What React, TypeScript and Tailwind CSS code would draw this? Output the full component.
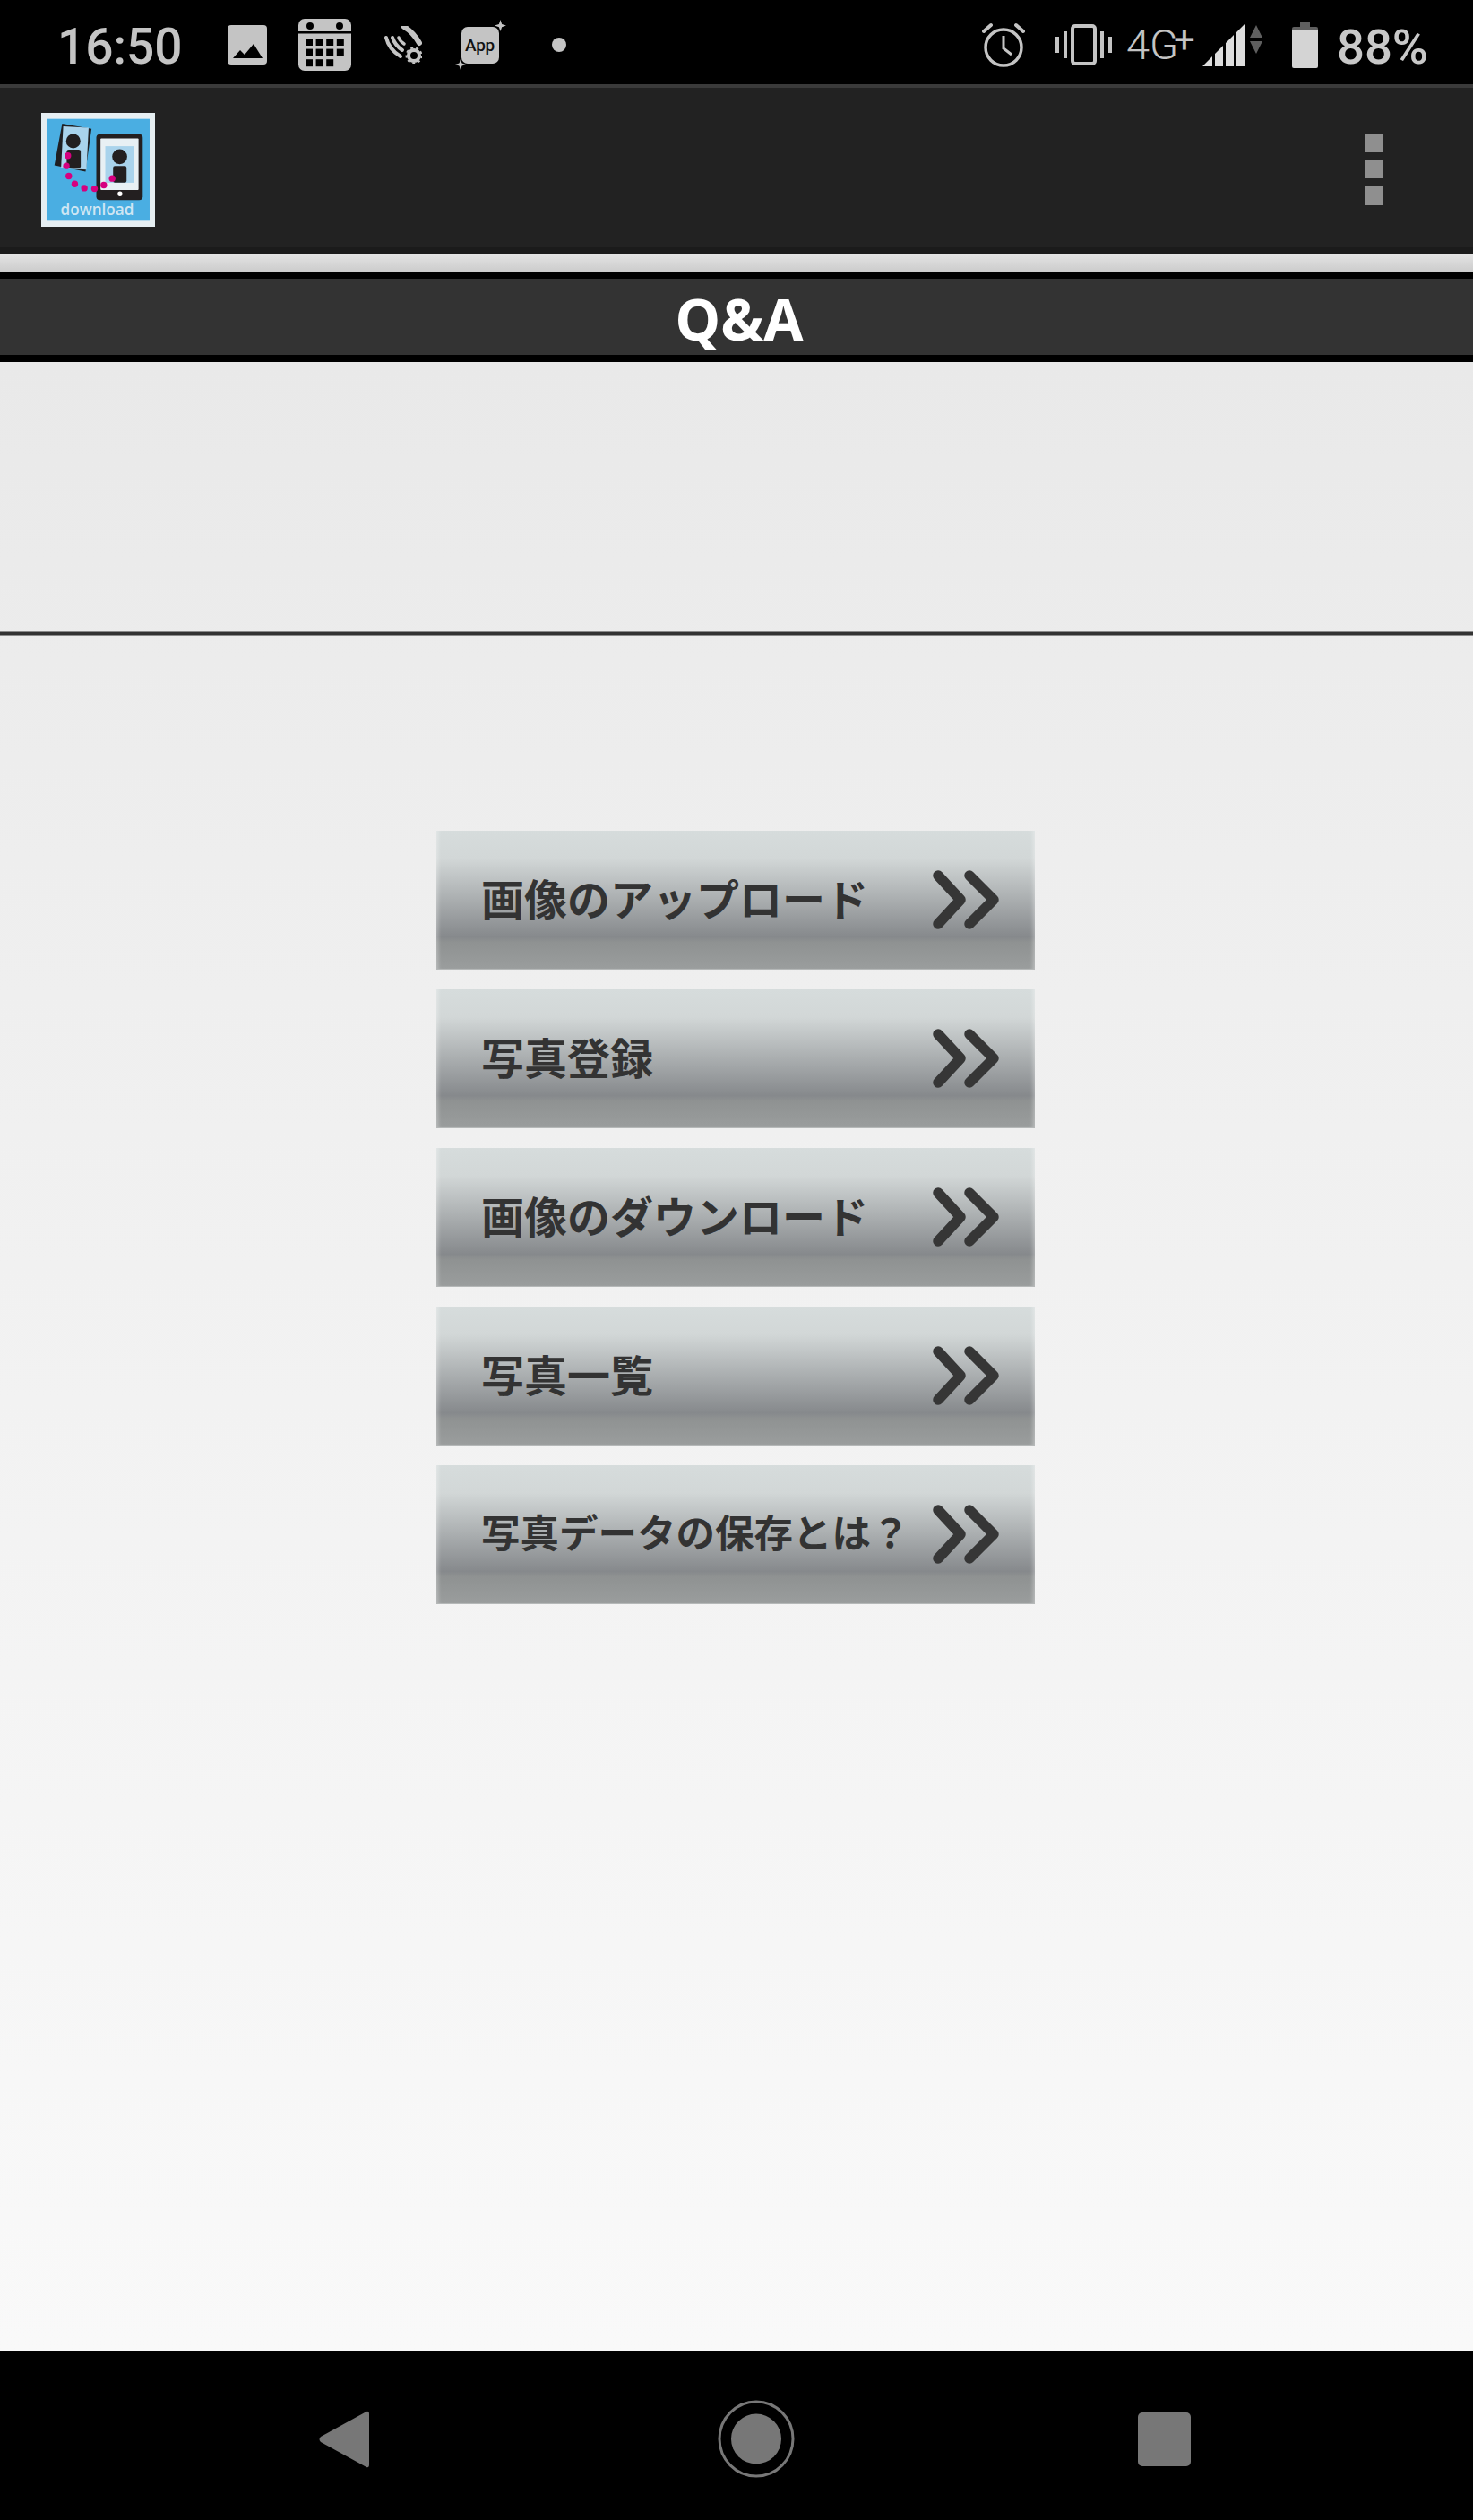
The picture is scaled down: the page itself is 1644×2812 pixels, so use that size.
const BG = "#c4c4c4";

function StatusLeftIcons() {
  return (
    <>
      <svg className="ml-[50px] h-[44px] w-[44px] shrink-0" viewBox="0 0 44 44">
        <rect width="44" height="44" rx="4" fill={BG} />
        <path d="M6 37 L14 28 L19 33 L29 21 L39 37 Z" fill="#000" />
      </svg>
      <svg className="ml-[35px] h-[58px] w-[59px] shrink-0" viewBox="0 0 59 58">
        <rect width="59" height="58" rx="7" fill={BG} />
        <rect x="0" y="14" width="59" height="2.5" fill="#000" />
        <circle cx="13" cy="8" r="4" fill="#000" />
        <circle cx="46" cy="8" r="4" fill="#000" />
        {[0, 1, 2].map((r) =>
          [0, 1, 2, 3].map((c) =>
            r === 2 && c === 3 ? null : (
              <rect key={`${r}${c}`} x={8 + c * 11.6} y={22 + r * 11.6} width="8" height="8" fill="#000" />
            ),
          ),
        )}
      </svg>
      <svg className="ml-[37px] h-[42px] w-[42px] shrink-0" viewBox="0 0 42 42">
        <g fill="none" stroke={BG} strokeLinecap="round">
          <path d="M2 13 C4 22 10 29 18 34" strokeWidth="4" />
          <path d="M9 13 C11 19 14 23 20 27" strokeWidth="4" />
          <path d="M16 13 C17 16 19 18 22 20" strokeWidth="3.5" />
          <path d="M22 1 C29 5 35 12 39 19" strokeWidth="6" />
        </g>
        <circle cx="33" cy="33" r="6" fill="none" stroke={BG} strokeWidth="4" />
        <circle cx="33" cy="33" r="8.5" fill="none" stroke={BG} strokeWidth="2" strokeDasharray="3 3" />
      </svg>
      <div className="relative ml-[44px] flex h-[41px] w-[42px] shrink-0 items-center justify-center rounded-[7px] bg-[#c4c4c4]">
        <span className="font-['Roboto',sans-serif] text-[19px] font-medium leading-none tracking-[-0.3px] text-[#111]">App</span>
        <svg className="absolute right-[-8px] top-[-8px] h-[13px] w-[13px]" viewBox="0 0 12 12">
          <path d="M6 0 L7.5 4.5 L12 6 L7.5 7.5 L6 12 L4.5 7.5 L0 6 L4.5 4.5 Z" fill={BG} />
        </svg>
        <svg className="absolute bottom-[-7px] left-[-7px] h-[12px] w-[12px]" viewBox="0 0 12 12">
          <path d="M6 0 L7.5 4.5 L12 6 L7.5 7.5 L6 12 L4.5 7.5 L0 6 L4.5 4.5 Z" fill={BG} />
        </svg>
      </div>
      <div className="ml-[59px] h-[16px] w-[16px] shrink-0 rounded-full bg-[#c4c4c4]" />
    </>
  );
}

function StatusRightIcons() {
  return (
    <>
      <svg className="h-[50px] w-[48px] shrink-0" viewBox="0 0 48 50">
        <circle cx="24" cy="28" r="20" fill="none" stroke={BG} strokeWidth="3.5" />
        <path d="M24 15 V29 L33 36" fill="none" stroke={BG} strokeWidth="3" />
        <path d="M2 10 L10 3 M46 10 L38 3" stroke={BG} strokeWidth="4" strokeLinecap="round" />
      </svg>
      <svg className="ml-[34px] h-[46px] w-[63px] shrink-0" viewBox="0 0 63 46">
        <rect x="19" y="2" width="25" height="42" rx="3" fill="none" stroke={BG} strokeWidth="4" />
        <rect x="9" y="8" width="4" height="30" fill={BG} />
        <rect x="50" y="8" width="4" height="30" fill={BG} />
        <rect x="0" y="14" width="4" height="18" fill={BG} />
        <rect x="59" y="14" width="4" height="18" fill={BG} />
      </svg>
      <div className="relative ml-[16px] h-[46px] w-[75px] shrink-0 font-['Roboto',sans-serif] font-light leading-none text-[#c4c4c4]">
        <span className="absolute left-0 top-[-1px] text-[47px] leading-none">4G</span>
        <span className="absolute right-[-2px] top-[-3px] text-[42px] font-normal leading-none">+</span>
      </div>
      <svg className="ml-[10px] h-[47px] w-[68px] shrink-0" viewBox="0 0 68 47">
        <path d="M0 47 L11 36 V47 Z M14 33 L23 24 V47 H14 Z M26 21 L35 12 V47 H26 Z M38 9 L47 0 V47 H38 Z" fill="#dddddd" />
        <path d="M60 1 L67 15 H53 Z M53 19 H67 L60 33 Z" fill="#5f5f5f" />
      </svg>
      <svg className="ml-[32px] h-[51px] w-[29px] shrink-0" viewBox="0 0 29 51">
        <path d="M9 0 H20 V5 H27 A2 2 0 0 1 29 7 V12 H0 V7 A2 2 0 0 1 2 5 H9 Z" fill="#5f5f5f" />
        <path d="M0 9 H29 V49 A2 2 0 0 1 27 51 H2 A2 2 0 0 1 0 49 Z" fill="#d4d4d4" />
      </svg>
      <span className="ml-[21px] mt-[5px] font-['Roboto',sans-serif] text-[54.5px] font-medium leading-none text-[#c8c8c8]">88%</span>
    </>
  );
}

function Logo() {
  return (
    <svg className="h-[127px] w-[127px] shrink-0" viewBox="48 47 380 380">
      <rect x="48" y="47" width="380" height="380" fill="#e6eef2" />
      <rect x="67" y="67" width="343" height="340" fill="#4aaee2" />
      <path d="M118 83 L216 100 L196 243 L92 222 Z" fill="#1f1f22" />
      <rect x="118" y="94" width="85" height="140" fill="#a9d3ec" transform="rotate(3 160 160)" />
      <circle cx="155" cy="141" r="24" fill="#231f20" />
      <rect x="133" y="170" width="47" height="62" rx="7" fill="#231f20" />
      <rect x="232" y="118" width="155" height="220" rx="12" fill="#231f20" />
      <rect x="246" y="132" width="127" height="172" rx="3" fill="#e8f0f4" />
      <rect x="262" y="158" width="95" height="122" fill="#a9d3ec" />
      <circle cx="310" cy="193" r="25" fill="#231f20" />
      <rect x="288" y="224" width="45" height="56" rx="6" fill="#231f20" />
      <circle cx="311" cy="317" r="8" fill="#fff" />
      {[[137, 190], [132, 224], [140, 258], [160, 284], [192, 298], [226, 300], [257, 288], [285, 266]].map(([x, y]) => (
        <circle key={`${x}-${y}`} cx={x} cy={y} r="11" fill="#d6007f" />
      ))}
      <text x="235" y="388" textAnchor="middle" textLength="245" lengthAdjust="spacingAndGlyphs" fontFamily="'Open Sans', sans-serif" fontWeight="600" fontSize="52" fill="#cfe6f3">
        download
      </text>
    </svg>
  );
}

function Chevrons() {
  return (
    <svg className="h-[66px] w-[76px] shrink-0" viewBox="0 0 76 66">
      <g fill="none" stroke="#363636" strokeWidth="11.5" strokeLinecap="round" strokeLinejoin="round">
        <path d="M7 6 L32 33 L7 60" />
        <path d="M42 6 L69 33 L42 60" />
      </g>
    </svg>
  );
}

const items = [
  { label: "画像のアップロード", cls: "text-[48px]" },
  { label: "写真登録", cls: "text-[48px]" },
  { label: "画像のダウンロード", cls: "text-[48px]" },
  { label: "写真一覧", cls: "text-[48px]" },
  { label: "写真データの保存とは？", cls: "text-[43.5px]" },
];

function MenuButton({ label, cls }: { label: string; cls: string }) {
  return (
    <div className="flex h-[155px] w-[668px] items-center justify-between border-b border-[#b5b8b8] bg-[linear-gradient(180deg,#d6dcdc_0%,#d2d7d7_20%,#86898c_77%,#8f9292_81%,#9a9d9d_100%)] pl-[50px] pr-[39px] shadow-[inset_5px_0_4px_-3px_rgba(255,255,255,0.35),inset_-5px_0_4px_-3px_rgba(255,255,255,0.35)]">
      <span className={`mb-[6px] font-['Noto_Sans_CJK_JP',sans-serif] font-bold leading-none text-[#333333] ${cls}`}>{label}</span>
      <Chevrons />
    </div>
  );
}

export default function App() {
  return (
    <div className="flex h-[2812px] w-[1644px] flex-col overflow-hidden bg-black">
      <div className="flex h-[94px] shrink-0 items-center pt-[6px]">
        <span className="ml-[64px] mt-[5px] font-['Roboto',sans-serif] text-[55px] font-medium leading-none text-[#c4c4c4]">16:50</span>
        <StatusLeftIcons />
        <div className="ml-auto mr-[50px] flex items-center">
          <StatusRightIcons />
        </div>
      </div>

      <div className="flex h-[189px] shrink-0 items-center border-t-[4px] border-b-[7px] border-t-[#3a3a3a] border-b-[#1b1b1b] bg-[#222222] pl-[46px] pr-[100px] pt-[4px]">
        <Logo />
        <div className="ml-auto flex flex-col gap-[9px]">
          <div className="h-[20px] w-[20px] bg-[#8f8f8f]" />
          <div className="h-[20px] w-[20px] bg-[#8f8f8f]" />
          <div className="h-[21px] w-[20px] bg-[#8f8f8f]" />
        </div>
      </div>

      <div className="h-[20px] shrink-0 bg-[linear-gradient(180deg,#e4e4e4,#cccccc)]" />

      <div className="flex h-[101px] shrink-0 items-center justify-center border-y-[8px] border-black bg-[#333333]">
        <span className="relative left-[3px] top-[2px] font-['Noto_Sans',sans-serif] text-[64px] font-bold leading-none text-white">Q&amp;A</span>
      </div>

      <div className="flex flex-1 flex-col bg-[linear-gradient(180deg,#e9e9e9_0%,#eeeeee_25%,#f9f9f9_100%)]">
        <div className="h-[300px] shrink-0" />
        <div className="h-[6px] shrink-0 border-y border-[#8a8a8a] bg-[#333333]" />
        <div className="ml-[487px] mt-[217px] flex flex-col gap-[22px]">
          {items.map((it) => (
            <MenuButton key={it.label} label={it.label} cls={it.cls} />
          ))}
        </div>
      </div>

      <div className="flex h-[189px] shrink-0 items-start">
        <svg className="ml-[356px] mt-[67px] h-[64px] w-[56px] shrink-0" viewBox="0 0 56 64">
          <path d="M53 1 Q56 0 56 4 V60 Q56 64 53 63 L2 35 Q-1 32 2 29 Z" fill="#777777" />
        </svg>
        <svg className="ml-[389px] mt-[55px] h-[87px] w-[86px] shrink-0" viewBox="0 0 86 87">
          <ellipse cx="43" cy="43.5" rx="41" ry="41.5" fill="none" stroke="#777777" strokeWidth="3" />
          <ellipse cx="43" cy="43.5" rx="28" ry="28" fill="#777777" />
        </svg>
        <div className="ml-[383px] mt-[69px] h-[60px] w-[59px] shrink-0 rounded-[5px] bg-[#777777]" />
      </div>
    </div>
  );
}
